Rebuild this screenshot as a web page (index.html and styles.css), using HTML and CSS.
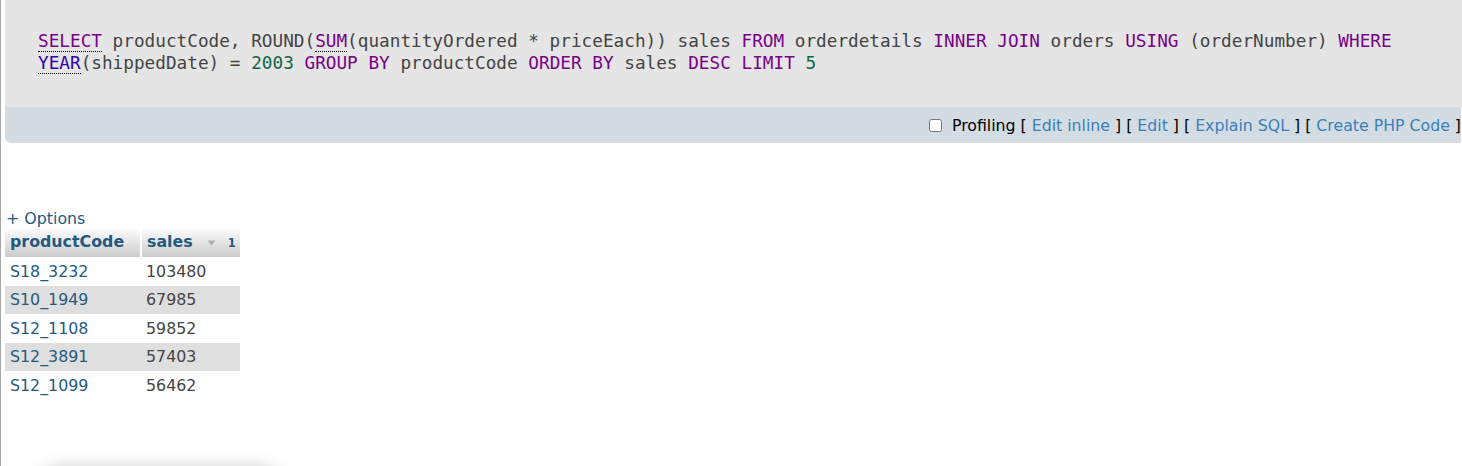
FILE: index.html
```html
<!DOCTYPE html>
<html>
<head>
<meta charset="utf-8">
<link rel="stylesheet" href="styles.css">
</head>
<body>
<div class="page">
  <div class="sqlbox">
    <div class="sql"><a class="kw doc">SELECT</a> productCode, ROUND(<a class="kw doc">SUM</a>(quantityOrdered * priceEach)) sales <span class="kw">FROM</span> orderdetails <span class="kw">INNER JOIN</span> orders <span class="kw">USING</span> (orderNumber) <span class="kw">WHERE</span><br><a class="bi doc">YEAR</a>(shippedDate) = <span class="num">2003</span> <span class="kw">GROUP BY</span> productCode <span class="kw">ORDER BY</span> sales <span class="kw">DESC</span> <span class="kw">LIMIT</span> <span class="num">5</span></div>
  </div>
  <div class="tools">
    <span class="toolline"><label class="prof"><input type="checkbox" class="cb">Profiling</label> [ <a class="tl">Edit inline</a> ] [ <a class="tl">Edit</a> ] [ <a class="tl">Explain SQL</a> ] [ <a class="tl">Create PHP Code</a> ]</span>
  </div>

  <div class="results">
    <a class="options">+ Options</a>
    <table class="data">
      <colgroup><col class="w1"><col class="w2"></colgroup>
      <thead>
        <tr>
          <th class="c1">productCode</th>
          <th class="c2">sales<span class="sort"><svg width="9" height="6" viewBox="0 0 9 6"><path d="M0.5 0.5 L8.5 0.5 L4.5 5.5 Z" fill="#b0b0b0"/></svg></span><span class="ord">1</span></th>
        </tr>
      </thead>
      <tbody>
        <tr><td class="code">S18_3232</td><td class="n">103480</td></tr>
        <tr class="even"><td class="code">S10_1949</td><td class="n">67985</td></tr>
        <tr><td class="code">S12_1108</td><td class="n">59852</td></tr>
        <tr class="even"><td class="code">S12_3891</td><td class="n">57403</td></tr>
        <tr><td class="code">S12_1099</td><td class="n">56462</td></tr>
      </tbody>
    </table>
  </div>
  <div class="floater"></div>
</div>
</body>
</html>
```

FILE: styles.css
```css
html, body {
  margin: 0;
  padding: 0;
  background: #fff;
  overflow: hidden;
}
body {
  height: 466px;
  border-left: 1px solid #a8a8a8;
  font-family: "DejaVu Sans", sans-serif;
  font-size: 15.84px;
  color: #444;
}
.page {
  padding-left: 4px;
}
.sqlbox {
  background: #e5e5e5;
  height: 107px;
  box-sizing: border-box;
  padding: 30px 0 0 33px;
  width: 1480px;
}
.sql {
  font-family: "DejaVu Sans Mono", monospace;
  font-size: 17.72px;
  line-height: 22px;
  color: #444;
  white-space: nowrap;
}
.kw { color: #770088; }
.bi { color: #3300aa; }
.num { color: #116644; }
.doc {
  text-decoration: none;
  border-bottom: 1px dotted #000;
}
.tools {
  background: #d3dce3;
  height: 36px;
  width: 1456px;
  box-sizing: border-box;
  border-bottom-left-radius: 6px;
  display: flex;
  align-items: center;
  justify-content: flex-end;
  padding-right: 0;
  color: #000;
}
.toolline {
  white-space: nowrap;
  line-height: 20px;
  font-size: 15.75px;
  padding-top: 1px;
}
.prof {
  color: #000;
}
.cb {
  width: 13px;
  height: 13px;
  margin: 0 10px 0 0;
  vertical-align: -1px;
}
.tl { color: #3a7fbc; text-decoration: none; }
.results {
  padding-top: 66px;
}
.options {
  display: block;
  color: #235a81;
  text-decoration: none;
  line-height: 19px;
  padding-left: 1px;
  height: 19px;
}
.data {
  border-collapse: collapse;
  table-layout: fixed;
  width: 235px;
}
.w1 { width: 136px; }
.w2 { width: 99px; }
.data th {
  background: linear-gradient(#fdfdfd, #cccccc);
  color: #235a81;
  font-weight: bold;
  text-align: left;
  height: 29px;
  box-sizing: border-box;
  padding: 0 5px 1px;
  line-height: 18px;
  white-space: nowrap;
  border-right: 2px solid #fff;
}
.data th.c2 { border-right: 0; }
.sort {
  margin-left: 14px;
}
.sort svg { vertical-align: 1px; }
.ord {
  font-size: 11.5px;
  margin-left: 12px;
  font-weight: bold;
  color: #235a81;
}
.data td {
  padding: 1px 5px 0;
  height: 27.5px;
  line-height: 18px;
  white-space: nowrap;
}
.data tr.even td { background: #dfdfdf; }
.code { color: #235a81; }
.n { color: #444; }
.floater {
  margin: 68px 0 0 35px;
  width: 240px;
  height: 40px;
  background: #fff;
  box-shadow: 0 0 18px rgba(0, 0, 0, 0.22);
  border-radius: 20px;
}
```
